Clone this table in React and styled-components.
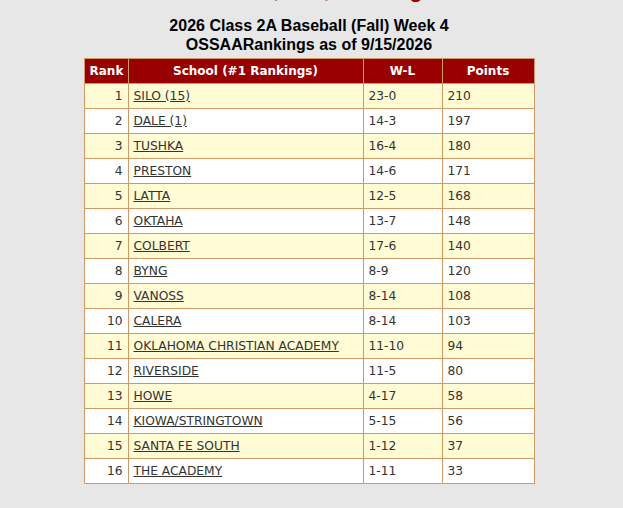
import React from 'react';
import styled, { createGlobalStyle } from 'styled-components';

const GlobalStyle = createGlobalStyle`
  body {
    margin: 0;
    background: #e7e7e8;
    font-family: "DejaVu Sans", Verdana, sans-serif;
  }
`;

const Page = styled.div`
  width: 618px;
  height: 508px;
  overflow: hidden;
  display: flex;
  flex-direction: column;
  align-items: center;
`;

const Banner = styled.h2`
  margin: -24px 0 0;
  height: 28px;
  line-height: 28px;
  font-family: "Liberation Sans", Arial, sans-serif;
  font-size: 22px;
  font-weight: bold;
  color: #990000;
  white-space: nowrap;
`;

const Title = styled.h3`
  margin: 12px 0 4px;
  font-family: "Liberation Sans", Arial, sans-serif;
  font-size: 16px;
  line-height: 19px;
  font-weight: bold;
  color: #000;
  text-align: center;
`;

const Table = styled.table`
  border-collapse: collapse;
  width: 450px;
  table-layout: fixed;
  font-size: 12.25px;
  color: #333;
`;

const HeadCell = styled.th`
  background: #990000;
  color: #fff;
  font-size: 12px;
  font-weight: bold;
  height: 24px;
  padding: 0 5px;
  border: 1px solid #cf9a65;
  text-align: center;
`;

const Row = styled.tr`
  background: ${(p) => (p.$odd ? '#fffbd4' : '#ffffff')};
`;

const Cell = styled.td`
  height: 24px;
  padding: 0 5px;
  border: 1px solid #cf9a65;
  text-align: ${(p) => (p.$right ? 'right' : 'left')};
`;

const SchoolLink = styled.a`
  color: #333;
  text-decoration: underline;
`;

const rows = [
  ['SILO (15)', '23-0', 210],
  ['DALE (1)', '14-3', 197],
  ['TUSHKA', '16-4', 180],
  ['PRESTON', '14-6', 171],
  ['LATTA', '12-5', 168],
  ['OKTAHA', '13-7', 148],
  ['COLBERT', '17-6', 140],
  ['BYNG', '8-9', 120],
  ['VANOSS', '8-14', 108],
  ['CALERA', '8-14', 103],
  ['OKLAHOMA CHRISTIAN ACADEMY', '11-10', 94],
  ['RIVERSIDE', '11-5', 80],
  ['HOWE', '4-17', 58],
  ['KIOWA/STRINGTOWN', '5-15', 56],
  ['SANTA FE SOUTH', '1-12', 37],
  ['THE ACADEMY', '1-11', 33],
];

const App = () => (
  <>
    <GlobalStyle />
    <Page>
      <Banner>Baseball, Fall, Rankings</Banner>
      <Title>
        2026 Class 2A Baseball (Fall) Week 4
        <br />
        OSSAARankings as of 9/15/2026
      </Title>
      <Table>
        <colgroup>
          <col style={{ width: 44 }} />
          <col style={{ width: 235 }} />
          <col style={{ width: 79 }} />
          <col style={{ width: 92 }} />
        </colgroup>
        <thead>
          <tr>
            <HeadCell>Rank</HeadCell>
            <HeadCell>School (#1 Rankings)</HeadCell>
            <HeadCell>W-L</HeadCell>
            <HeadCell>Points</HeadCell>
          </tr>
        </thead>
        <tbody>
          {rows.map(([school, wl, pts], i) => (
            <Row key={school} $odd={i % 2 === 0}>
              <Cell $right>{i + 1}</Cell>
              <Cell>
                <SchoolLink href="#">{school}</SchoolLink>
              </Cell>
              <Cell>{wl}</Cell>
              <Cell>{pts}</Cell>
            </Row>
          ))}
        </tbody>
      </Table>
    </Page>
  </>
);

export default App;
